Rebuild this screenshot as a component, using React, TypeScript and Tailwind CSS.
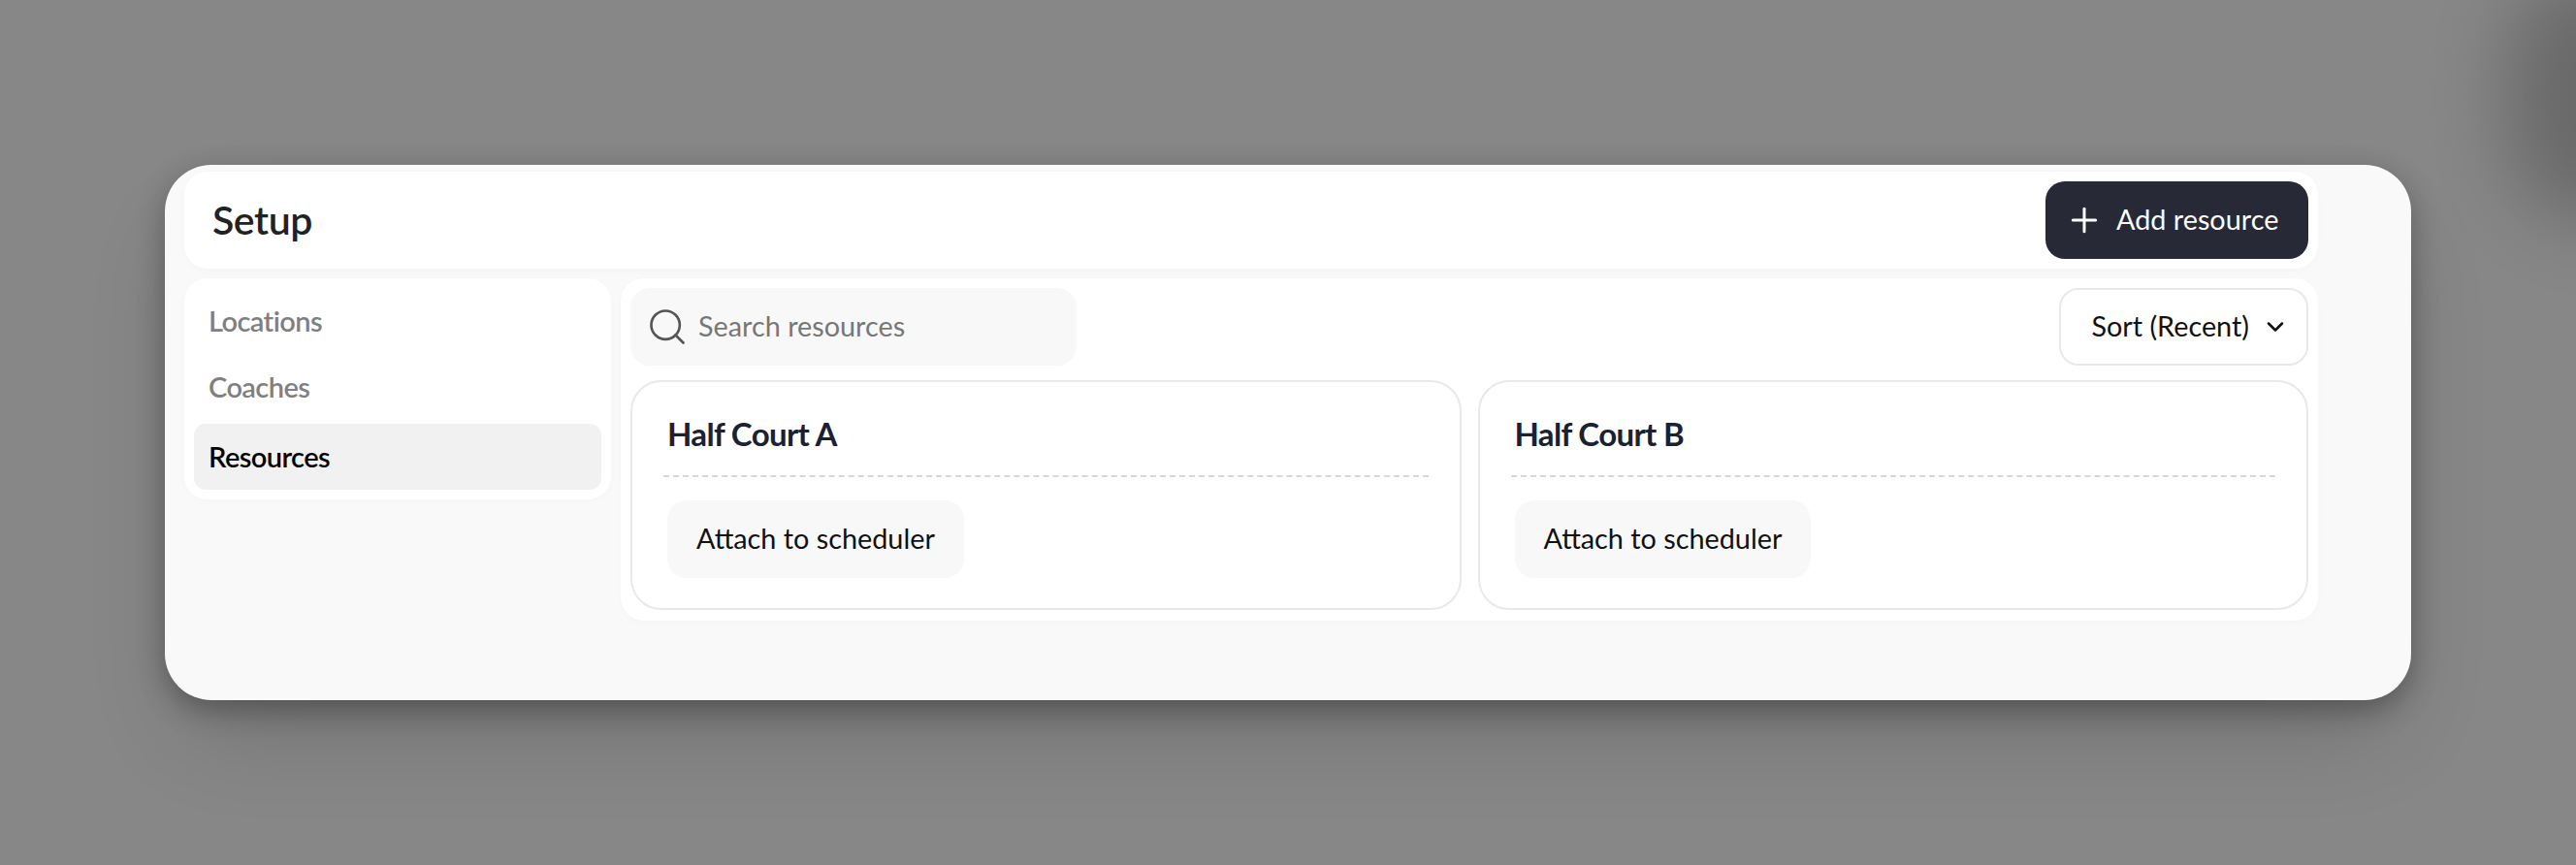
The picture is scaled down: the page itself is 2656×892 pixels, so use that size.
import React from "react";
import { ChevronDown, Plus, Search } from "lucide-react";

const resources = ["Half Court A", "Half Court B"];

function ResourceCard({ name }: { name: string }) {
  return (
    <div className="flex-1 rounded-[32px] border-2 border-[#e8e8ee] bg-white p-[32px] pb-[31px]">
      <div className="border-b-2 border-dashed border-[#d6d6dc] px-1 pb-[22px]">
        <h3 className="text-[33px] leading-[42px] font-bold tracking-[-0.02em] text-[#1a2133]">{name}</h3>
      </div>
      <button className="mx-1 mt-6 h-20 rounded-[20px] bg-[#f8f8f8] px-[30px] text-[28.8px] text-[#111]">
        Attach to scheduler
      </button>
    </div>
  );
}

export default function App() {
  return (
    <div className="relative h-[892px] w-[2656px] overflow-hidden bg-[#878787] pt-[170px] pl-[170px] font-['Lato',sans-serif]">
      <div className="absolute top-[-30px] right-[-110px] h-[260px] w-[180px] rounded-full bg-[#555] opacity-60 blur-[40px]" />
      <div className="relative h-[552px] w-[2316px] rounded-[48px] bg-[#f9f9f9] pt-[7px] pl-5 shadow-[0_50px_100px_-24px_rgba(0,0,0,0.18),0_10px_30px_rgba(0,0,0,0.3)]">
        <div className="w-[2200px]">
          <header className="flex h-[100px] items-center justify-between rounded-[24px] bg-white pr-[10px] pl-[29px] shadow-[0_2px_8px_rgba(0,0,0,0.02)]">
            <h1 className="text-[41px] font-semibold tracking-[-0.01em] text-[#222]">Setup</h1>
            <button className="flex h-20 w-[271px] items-center gap-[13px] rounded-[20px] bg-[#272936] pl-5 text-[28.8px] text-white">
              <Plus size={40} strokeWidth={1.8} />
              Add resource
            </button>
          </header>

          <div className="mt-[10px] flex items-start gap-[10px]">
            <nav className="h-[228px] w-[440px] rounded-[24px] bg-white p-[10px] text-[29px] font-semibold tracking-[-0.02em] shadow-[0_2px_8px_rgba(0,0,0,0.02)]">
              <div className="flex h-[68px] items-center px-[15px] text-[#808080]">Locations</div>
              <div className="flex h-[68px] items-center px-[15px] text-[#808080]">Coaches</div>
              <div className="mt-1 flex h-[68px] items-center rounded-[12px] bg-[#f1f1f1] px-[15px] text-black">Resources</div>
            </nav>

            <main className="h-[353px] flex-1 rounded-[24px] bg-white p-[10px] shadow-[0_2px_8px_rgba(0,0,0,0.02)]">
              <div className="flex items-center justify-between">
                <div className="flex h-20 w-[460px] items-center gap-[10px] rounded-[20px] bg-[#f8f8f8] pl-4">
                  <Search size={44} strokeWidth={1.45} className="shrink-0 text-[#555]" />
                  <input
                    placeholder="Search resources"
                    className="w-full bg-transparent text-[28.8px] outline-none placeholder:text-[#777]"
                  />
                </div>
                <button className="flex h-20 items-center gap-[13px] rounded-[20px] border-2 border-[#e8e8ee] bg-white pr-[18px] pl-[31px] text-[28.8px] text-[#111]">
                  Sort (Recent)
                  <ChevronDown size={28} strokeWidth={2.2} />
                </button>
              </div>
              <div className="mt-[15px] flex gap-[17px]">
                {resources.map((r) => (
                  <ResourceCard key={r} name={r} />
                ))}
              </div>
            </main>
          </div>
        </div>
      </div>
    </div>
  );
}
